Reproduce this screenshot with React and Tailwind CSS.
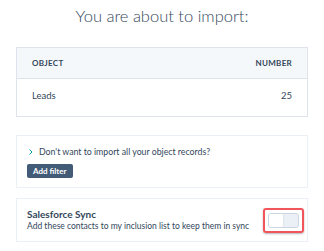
export default function App() {
  return (
    <div className="w-[324px] h-[251px] bg-white overflow-hidden text-[#33475b]" style={{ fontFamily: "Lato, 'Noto Sans', sans-serif" }}>
      <h1 className="pt-[6px] text-center text-[16.5px] leading-[20px] font-light text-[#33475b]">You are about to import:</h1>
      <div className="mx-4 mt-[21px] border border-[#dfe3eb]">
        <div className="flex justify-between items-center h-[31px] bg-[#f5f8fa] border-b border-[#dfe3eb] px-[15px] text-[8px] font-bold tracking-[0.3px]">
          <span>OBJECT</span>
          <span>NUMBER</span>
        </div>
        <div className="flex justify-between items-center h-[37px] px-[15px] pb-[3px] text-[9.5px]">
          <span>Leads</span>
          <span>25</span>
        </div>
      </div>
      <div className="mx-4 mt-[18px] border border-[#eaf0f6] px-[10px] pt-[11px] pb-[9px]">
        <div className="flex items-center h-[10px] text-[8.75px]">
          <svg width="8" height="8" viewBox="0 0 8 8"><path d="M2.5 1.5L5 4L2.5 6.5" fill="none" stroke="#0091ae" strokeWidth="1" /></svg>
          <span className="ml-[4px]">Don't want to import all your object records?</span>
        </div>
        <button className="block mt-[7px] h-[14px] px-[6px] bg-[#425b76] text-white text-[8px] font-bold rounded-[2px] leading-[14px]">Add filter</button>
      </div>
      <div className="mx-4 mt-[10px] border border-[#eaf0f6] pl-[10px] pr-[3px] flex items-center h-[44px]">
        <div className="flex-1">
          <div className="text-[10px] font-bold leading-[12px]">Salesforce Sync</div>
          <div className="text-[8.5px] leading-[12px]">Add these contacts to my inclusion list to keep them in sync</div>
        </div>
        <div className="border-2 border-[#f2545b] rounded-[3px] p-[3px] shadow-[0_1px_2px_rgba(0,0,0,0.3)]">
          <div className="w-[31px] h-[15px] bg-[#eaf0f6] border border-[#cbd6e2] rounded-[3px] flex">
            <div className="w-[15px] h-full bg-white rounded-[2px] border-r border-[#dfe3eb]"></div>
          </div>
        </div>
      </div>
    </div>
  );
}
